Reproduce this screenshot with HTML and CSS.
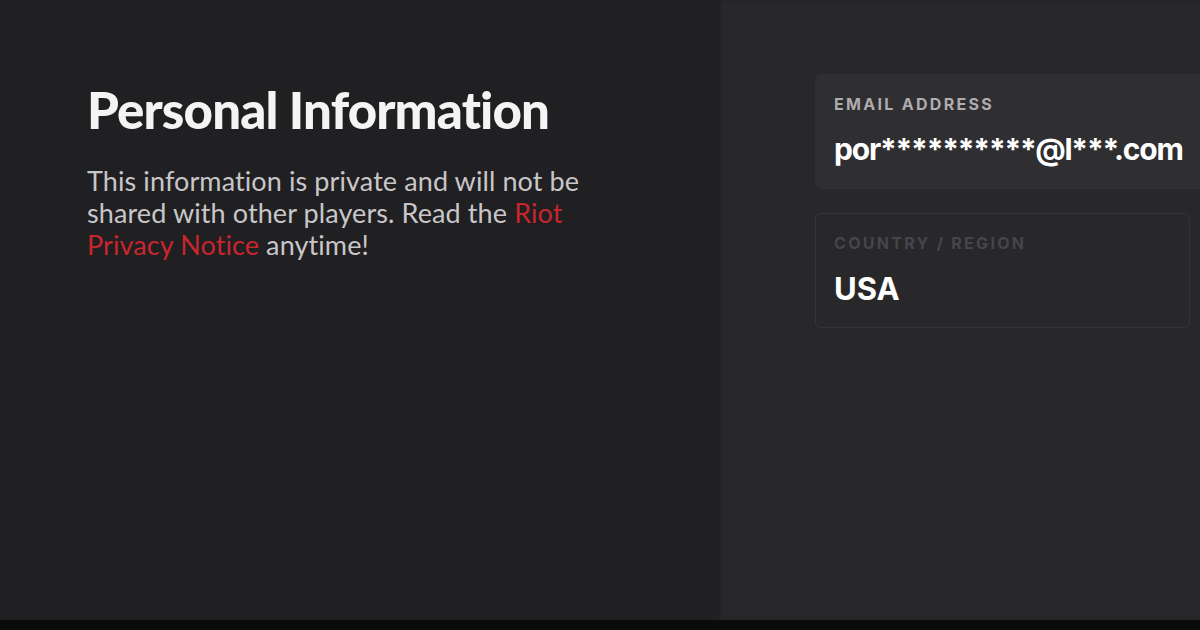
FILE: index.html
```html
<!DOCTYPE html>
<html lang="en">
  <head>
    <meta charset="UTF-8" />
    <meta name="viewport" content="width=device-width, initial-scale=1.0" />
    <title>Personal Information</title>
    <link rel="stylesheet" href="styles.css">
  </head>
  <body>
    <div class="page">
      <section class="intro">
        <h1>Personal Information</h1>
        <p class="intro-text">
          This information is private and will not be shared with other
          players. Read the
          <a href="#" class="privacy-link">Riot Privacy Notice</a>
          anytime!
        </p>
      </section>
      <section class="fields">
        <div class="field field-filled">
          <span class="field-label">Email Address</span>
          <span class="field-value field-email">por**********@l***.com</span>
        </div>
        <div class="field field-locked">
          <span class="field-label">Country / Region</span>
          <span class="field-value">USA</span>
        </div>
      </section>
    </div>
    <div class="bottom-bar"></div>
  </body>
</html>
```

FILE: styles.css
```css
:root {
  --panel-left: #201f21;
  --panel-right: #28272a;
  --card-background: #2f2e31;
  --card-border: #343336;
  --text-color: #f4f4f4;
  --muted-text: #c8c6c8;
  --label-color: #aeacaf;
  --label-dim: #47454a;
  --accent: #c8262e;
}

html,
body {
  margin: 0;
  height: 100%;
}

body {
  font-family: Lato, "Noto Sans", sans-serif;
  background: #0b0b0b;
  color: var(--text-color);
  overflow: hidden;
  display: flex;
  flex-direction: column;
}

.page {
  display: flex;
  height: 620px;
}

.intro {
  flex: none;
  width: 631px;
  padding: 80px 0 0 87px;
  background: var(--panel-left);
}

h1 {
  margin: 0;
  font-size: 51px;
  font-weight: 900;
  letter-spacing: -0.85px;
  line-height: 60px;
}

.intro-text {
  width: 505px;
  margin: 25px 0 0;
  font-size: 27px;
  line-height: 32px;
  letter-spacing: 0.1px;
  color: var(--muted-text);
}

.privacy-link {
  color: var(--accent);
  text-decoration: none;
}

.fields {
  flex: 1;
  min-width: 0;
  padding: 74px 0 0 97px;
  background: var(--panel-right);
  display: flex;
  flex-direction: column;
  gap: 24px;
  box-shadow: inset 2px 0 3px rgba(0, 0, 0, 0.2);
}

.field {
  display: flex;
  flex-direction: column;
  flex: none;
  box-sizing: border-box;
  height: 115px;
  padding: 20px 19px 0;
  border-radius: 6px;
}

.field-filled {
  width: 400px;
  background: var(--card-background);
}

.field-locked {
  width: 375px;
  border: 1px solid var(--card-border);
  padding: 19px 18px 0;
}

.field-label {
  font-family: Inter, "Noto Sans", sans-serif;
  font-size: 16px;
  font-weight: 700;
  letter-spacing: 2.3px;
  text-transform: uppercase;
  color: var(--label-color);
}

.field-locked .field-label {
  color: var(--label-dim);
}

.field-value {
  margin-top: 17px;
  font-family: Inter, "Noto Sans", sans-serif;
  font-size: 31px;
  font-weight: 700;
  color: #fff;
}

.field-email {
  font-size: 30px;
  letter-spacing: -1.2px;
}

.bottom-bar {
  flex: 1;
  background: #0b0b0b;
}
```
